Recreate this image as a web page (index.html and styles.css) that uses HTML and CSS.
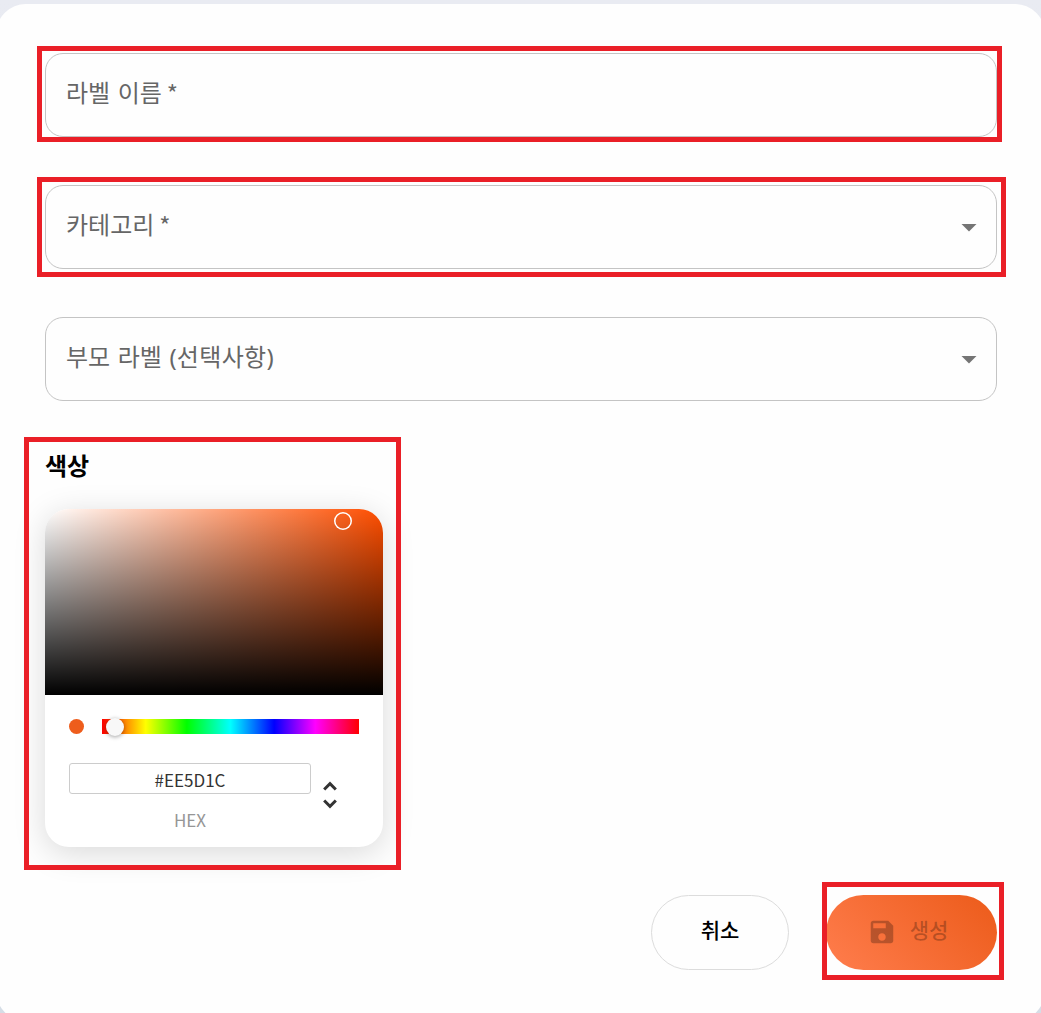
FILE: index.html
```html
<!DOCTYPE html>
<html lang="ko">
<head>
<meta charset="utf-8">
<title>라벨 생성</title>
<link rel="stylesheet" href="styles.css">
</head>
<body>
<main class="dialog">
  <form class="form">
    <div class="field"><span class="field-label">라벨 이름<span class="required">*</span></span></div>
    <div class="field"><span class="field-label">카테고리<span class="required">*</span></span>
      <svg class="arrow" viewBox="0 0 36 36"><path d="M10.5 15l7.5 7.5 7.5-7.5z"/></svg></div>
    <div class="field"><span class="field-label">부모 라벨 <span class="note">(선택사항)</span></span>
      <svg class="arrow" viewBox="0 0 36 36"><path d="M10.5 15l7.5 7.5 7.5-7.5z"/></svg></div>
  </form>
  <section class="color">
    <h2 class="color-title">색상</h2>
    <div class="picker">
      <div class="saturation"><span class="sat-pointer"></span></div>
      <div class="controls">
        <div class="hue-row">
          <span class="swatch"></span>
          <div class="hue"><span class="hue-pointer"></span></div>
        </div>
        <div class="hex-row">
          <div class="hex">
            <div class="hex-input">#EE5D1C</div>
            <span class="hex-label">HEX</span>
          </div>
          <svg class="toggle" viewBox="0 0 24 24"><path d="M12,18.17L8.83,15L7.42,16.41L12,21L16.59,16.41L15.17,15M12,5.83L15.17,9L16.58,7.59L12,3L7.41,7.59L8.83,9Z"/></svg>
        </div>
      </div>
    </div>
  </section>
  <footer class="actions">
    <div class="button cancel">취소</div>
    <div class="button create">
      <svg class="save" viewBox="0 0 24 24"><path d="M17 3H5c-1.11 0-2 .9-2 2v14c0 1.1.89 2 2 2h14c1.1 0 2-.9 2-2V7l-4-4zm-5 16c-1.66 0-3-1.34-3-3s1.34-3 3-3 3 1.34 3 3-1.34 3-3 3zm3-10H5V5h10v4z"/></svg>
      <span class="create-text">생성</span>
    </div>
  </footer>
</main>
<div class="mark mark-name"></div>
<div class="mark mark-category"></div>
<div class="mark mark-color"></div>
<div class="mark mark-create"></div>
</body>
</html>
```
FILE: styles.css
```css
* { box-sizing: border-box; }
html, body { height: 100%; }
body {
  margin: 0;
  position: relative;
  overflow: hidden;
  background: linear-gradient(#e9ebf2, #d5dde6);
  font-family: "Noto Sans CJK KR", "Noto Sans", sans-serif;
}
.dialog {
  height: 1017px;
  margin: 4px -4px 0;
  padding: 49px 48px 0 49px;
  border-radius: 30px;
  background: #fefefe;
}
.form { display: flex; flex-direction: column; gap: 48px; }
.field {
  height: 84px;
  display: flex;
  align-items: center;
  justify-content: space-between;
  padding: 0 9px 0 20px;
  border: 1px solid #c4c4c4;
  border-radius: 18px;
}
.field-label {
  font-size: 24px;
  line-height: 34px;
  color: #666;
  padding-bottom: 6px;
  white-space: pre;
  word-spacing: .8px;
}
.note { font-family: "Noto Sans", "Noto Sans CJK KR", sans-serif; letter-spacing: .3px; }
.required { display: inline-block; line-height: 1; margin-left: 5px; vertical-align: -1px; }
.arrow { width: 36px; height: 36px; fill: #757575; }

.color { margin-top: 47px; }
.color-title {
  margin: 0 0 27px;
  font-size: 24px;
  line-height: 34px;
  font-weight: 700;
  color: #000;
}
.picker {
  width: 338px;
  height: 338px;
  border-radius: 24px;
  background: #fff;
  box-shadow: 0 6px 32px rgba(0, 0, 0, .15);
}
.saturation {
  position: relative;
  height: 186px;
  border-radius: 24px 24px 0 0;
  background:
    linear-gradient(to top, #000, transparent),
    linear-gradient(to right, #fff, transparent),
    #ff4e00;
}
.sat-pointer {
  position: absolute;
  left: 289px;
  top: 3px;
  width: 18px;
  height: 18px;
  border-radius: 50%;
  box-shadow: inset 0 0 0 1.5px #fff;
}
.controls { padding: 24px 24px 0; }
.hue-row { display: flex; align-items: center; gap: 18px; }
.swatch { width: 15px; height: 15px; border-radius: 50%; background: #ee5d1c; }
.hue {
  position: relative;
  flex: 1;
  height: 15px;
  background: linear-gradient(to right, #f00 0%, #ff0 17%, #0f0 33%, #0ff 50%, #00f 67%, #f0f 83%, #f00 100%);
}
.hue-pointer {
  position: absolute;
  left: 4px;
  top: -1px;
  width: 18px;
  height: 18px;
  border-radius: 50%;
  background: #f8f8f8;
  box-shadow: 0 1px 4px rgba(0, 0, 0, .37);
}
.hex-row { display: flex; margin-top: 29px; }
.hex { width: 242px; text-align: center; }
.hex-input {
  height: 31px;
  border: 1px solid #ccc;
  border-radius: 3px;
  font-size: 17px;
  line-height: 31px;
  color: #333;
}
.hex-label {
  display: block;
  margin-top: 14px;
  font-size: 17px;
  line-height: 24px;
  color: #969696;
}
.toggle { width: 36px; height: 36px; margin: 14px 0 0 1px; fill: #333; }

.actions { display: flex; justify-content: flex-end; gap: 37px; margin-top: 48px; }
.button {
  height: 75px;
  display: flex;
  align-items: center;
  justify-content: center;
  border-radius: 38px;
  font-size: 21px;
  line-height: 30px;
  font-weight: 500;
  padding-bottom: 7px;
}
.cancel { width: 138px; border: 1px solid #dcdcdc; color: #000; }
.create {
  width: 171px;
  gap: 13px;
  padding: 0 8px 2px 0;
  background: linear-gradient(45deg, #ff7d4d, #ec5b1a);
  color: rgba(0, 0, 0, .26);
}
.create-text { padding-bottom: 5px; }
.save { width: 30px; height: 30px; fill: currentColor; }

.mark { position: absolute; border: 5px solid #ea1f27; }
.mark-name { left: 37px; top: 46px; width: 965px; height: 96px; }
.mark-category { left: 37px; top: 177px; width: 969px; height: 100px; }
.mark-color { left: 24px; top: 437px; width: 377px; height: 433px; }
.mark-create { left: 822px; top: 882px; width: 182px; height: 98px; }
```
